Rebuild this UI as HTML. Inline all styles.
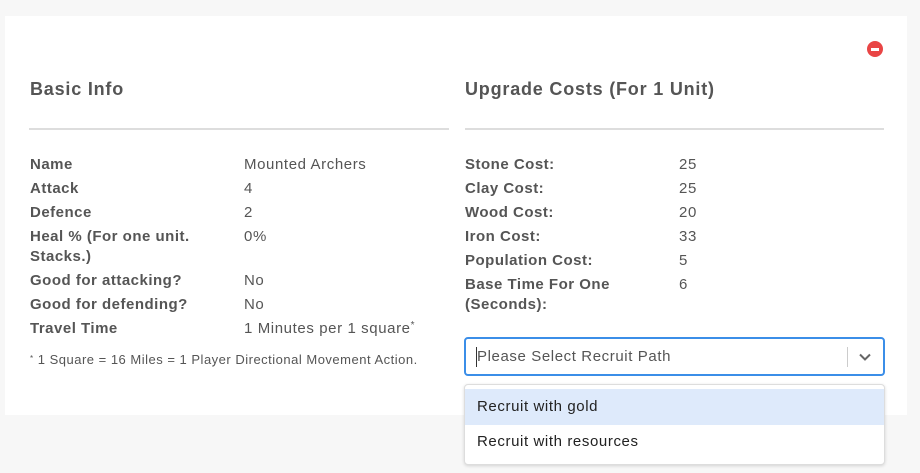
<!DOCTYPE html>
<html><head><meta charset="utf-8"><style>
*{margin:0;padding:0;box-sizing:border-box}
body{width:920px;height:473px;background:#f7f7f7;font-family:"Liberation Sans",sans-serif;color:#555;position:relative;overflow:hidden;font-size:15px;letter-spacing:.6px}
.card{position:absolute;left:5px;top:16px;width:902px;height:399px;background:#fff}
.a{position:absolute;white-space:nowrap;line-height:24px}
.t{margin-top:2px}
h2{position:absolute;font-size:18px;font-weight:bold;color:#555;letter-spacing:.8px;line-height:24px}
.hr{position:absolute;height:2px;background:#ddd}
.b{font-weight:bold;letter-spacing:.5px}
sup{vertical-align:top;line-height:12px;position:relative;top:3px}
.sel{position:absolute;left:464px;top:337px;width:421px;height:39px;border:2px solid #3b8ee8;border-radius:4px;background:#fff}
.menu{position:absolute;left:464px;top:384px;width:421px;height:81px;background:#fff;border:1px solid #ddd;border-radius:4px;box-shadow:0 1px 3px rgba(0,0,0,.15)}
</style></head><body>
<div class="card"></div>
<div class="a" style="left:867px;top:41px;width:16px;height:16px;border-radius:50%;background:#e94545"><div style="position:absolute;left:4px;top:6.5px;width:8px;height:3px;background:#fff"></div></div>
<h2 style="left:30px;top:77px">Basic Info</h2>
<h2 style="left:465px;top:77px">Upgrade Costs (For 1 Unit)</h2>
<div class="hr" style="left:29px;top:128px;width:420px"></div>
<div class="hr" style="left:465px;top:128px;width:419px"></div>

<div class="a b" style="left:30px;top:153px">Name</div>
<div class="a b" style="left:30px;top:177px">Attack</div>
<div class="a b" style="left:30px;top:201px">Defence</div>
<div class="a b" style="left:30px;top:225px">Heal % (For one unit.</div>
<div class="a b" style="left:30px;top:245px">Stacks.)</div>
<div class="a b" style="left:30px;top:269px">Good for attacking?</div>
<div class="a b" style="left:30px;top:293px">Good for defending?</div>
<div class="a b" style="left:30px;top:317px">Travel Time</div>

<div class="a" style="left:244px;top:153px">Mounted Archers</div>
<div class="a" style="left:244px;top:177px">4</div>
<div class="a" style="left:244px;top:201px">2</div>
<div class="a" style="left:244px;top:225px">0%</div>
<div class="a" style="left:244px;top:269px">No</div>
<div class="a" style="left:244px;top:293px">No</div>
<div class="a" style="left:244px;top:317px">1 Minutes per 1 square<sup style="font-size:10px">*</sup></div>
<div class="a" style="left:30px;top:348px;font-size:13px;letter-spacing:.5px"><sup style="font-size:8px;top:5px">*</sup> 1 Square = 16 Miles = 1 Player Directional Movement Action.</div>

<div class="a b" style="left:465px;top:153px">Stone Cost:</div>
<div class="a b" style="left:465px;top:177px">Clay Cost:</div>
<div class="a b" style="left:465px;top:201px">Wood Cost:</div>
<div class="a b" style="left:465px;top:225px">Iron Cost:</div>
<div class="a b" style="left:465px;top:249px">Population Cost:</div>
<div class="a b" style="left:465px;top:273px">Base Time For One</div>
<div class="a b" style="left:465px;top:293px">(Seconds):</div>
<div class="a" style="left:679px;top:153px">25</div>
<div class="a" style="left:679px;top:177px">25</div>
<div class="a" style="left:679px;top:201px">20</div>
<div class="a" style="left:679px;top:225px">33</div>
<div class="a" style="left:679px;top:249px">5</div>
<div class="a" style="left:679px;top:273px">6</div>

<div class="sel">
<div class="a" style="left:10px;top:8px;width:1px;height:20px;background:#333"></div>
<div class="a" style="left:11px;top:6px;color:#555">Please Select Recruit Path</div>
<div class="a" style="left:381px;top:8px;width:1px;height:20px;background:#ccc"></div>
<svg class="a" style="left:391px;top:11px" width="16" height="14" viewBox="0 0 16 14"><path d="M3 4.5 L8 9.5 L13 4.5" stroke="#666" stroke-width="2" fill="none"/></svg>
</div>
<div class="menu">
<div class="a" style="left:0;top:4px;width:419px;height:36px;background:#deeafb"></div>
<div class="a" style="left:12px;top:10px;color:#222">Recruit with gold</div>
<div class="a" style="left:12px;top:45px;color:#222">Recruit with resources</div>
</div>
</body></html>
